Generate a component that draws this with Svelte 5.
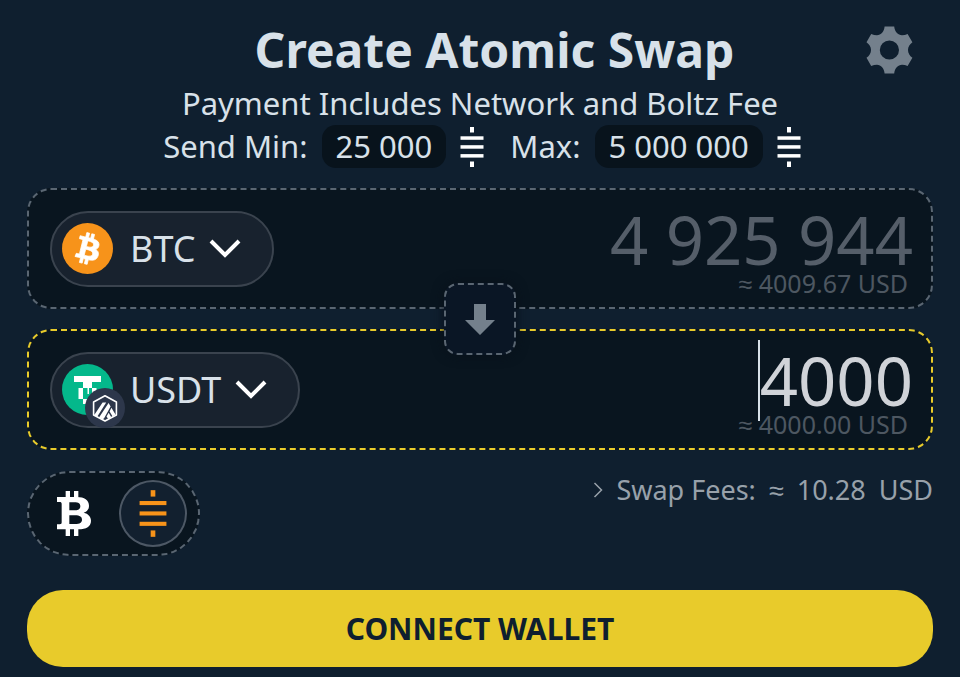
<script>
    let sendAmount = $state('4 925 944');
    let receiveAmount = $state('4000');
    let denomination = $state('sat');

    const limits = [
        { label: 'Send Min:', value: '25 000' },
        { label: 'Max:', value: '5 000 000' }
    ];
</script>

{#snippet satoshi()}
    <svg class="sat" viewBox="0 0 24 40" fill="currentColor" aria-hidden="true">
        <rect x="10" y="0" width="4" height="5.5" />
        <rect x="0.5" y="9.3" width="23" height="3.5" />
        <rect x="0.5" y="18.2" width="23" height="3.5" />
        <rect x="0.5" y="27.1" width="23" height="3.5" />
        <rect x="10" y="34.5" width="4" height="5.5" />
    </svg>
{/snippet}

{#snippet chevron()}
    <svg class="chevron" viewBox="0 0 32 20" fill="none" stroke="#fff" stroke-width="4" aria-hidden="true">
        <path d="M2 3 L16 17 L30 3" />
    </svg>
{/snippet}

<main>
    <header>
        <h1>Create Atomic Swap</h1>
        <button class="settings" aria-label="Settings">
            <svg viewBox="0 0 47 48" aria-hidden="true">
                <path
                    fill="#74808c"
                    fill-rule="evenodd"
                    d="M18.6 .5H28.2C28.6 5.5 32 9.2 36 9.2C38 9.2 39.8 8.8 41.6 8L46.4 16.2C43.6 18.2 42 21 42 24C42 27 43.6 29.8 46.4 31.8L41.6 40C39.8 39.2 38 38.8 36 38.8C32 38.8 28.6 42.5 28.2 47.5H18.6C18.2 42.5 15 38.8 11 38.8C9 38.8 7.2 39.2 5.2 40L.5 31.8C3.4 29.8 5 27 5 24C5 21 3.4 18.2 .5 16.2L5.2 8C7.2 8.8 9 9.2 11 9.2C15 9.2 18.2 5.5 18.6 .5ZM23.4 14.4A9.6 9.6 0 1 0 23.4 33.6A9.6 9.6 0 1 0 23.4 14.4Z"
                />
            </svg>
        </button>
    </header>

    <p class="subtitle">Payment Includes Network and Boltz Fee</p>
    <div class="limits">
        {#each limits as limit}
            <div class="limit">
                <span>{limit.label}</span>
                <button class="limit-value">{limit.value}</button>
                {@render satoshi()}
            </div>
        {/each}
    </div>

    <div class="assets">
        <section class="card">
            <button class="asset">
                <span class="icon">
                    <svg viewBox="0 0 32 32" aria-hidden="true">
                        <circle cx="16" cy="16" r="16" fill="#f7931a" />
                        <path
                            fill="#fff"
                            stroke="#fff"
                            stroke-width="0.5"
                            d="M23.189 14.02c.314-2.096-1.283-3.223-3.465-3.975l.708-2.84-1.728-.43-.69 2.765c-.454-.114-.92-.22-1.385-.326l.695-2.783L15.596 6l-.708 2.839c-.376-.086-.746-.17-1.104-.26l.002-.009-2.384-.595-.46 1.846s1.283.294 1.256.312c.7.175.826.638.805 1.006l-.806 3.235c.048.012.11.03.18.057l-.183-.045-1.13 4.532c-.086.212-.303.531-.793.41.018.025-1.256-.313-1.256-.313l-.858 1.978 2.25.561c.418.105.828.215 1.231.318l-.715 2.872 1.727.43.708-2.84c.472.127.93.245 1.378.357l-.706 2.828 1.728.43.715-2.866c2.948.558 5.164.333 6.097-2.333.752-2.146-.037-3.385-1.588-4.192 1.13-.26 1.98-1.003 2.207-2.538zm-3.95 5.538c-.533 2.147-4.148.986-5.32.695l.95-3.805c1.172.293 4.929.872 4.37 3.11zm.535-5.569c-.487 1.953-3.495.96-4.47.717l.86-3.45c.975.243 4.118.696 3.61 2.733z"
                        />
                    </svg>
                </span>
                BTC
                {@render chevron()}
            </button>
            <div class="amount">
                <div class="field">
                    <input class="muted" aria-label="Send amount" bind:value={sendAmount} />
                </div>
                <span class="fiat">≈ 4009.67 USD</span>
            </div>
        </section>

        <button class="flip" aria-label="Flip assets">
            <svg viewBox="0 0 30 31" fill="#74808c" aria-hidden="true">
                <path d="M9 0H21V16H30L15 31L0 16H9Z" />
            </svg>
        </button>

        <section class="card active">
            <button class="asset">
                <span class="icon">
                    <svg viewBox="0 0 51 51" aria-hidden="true">
                        <circle cx="25.5" cy="25.5" r="25.5" fill="#04b88b" />
                        <g fill="#fff">
                            <rect x="12" y="12" width="27" height="6" />
                            <rect x="21" y="18" width="9" height="6" />
                            <rect x="16.5" y="24" width="4.5" height="11" />
                            <rect x="30" y="24" width="4.5" height="6" />
                            <rect x="25.5" y="24" width="1.5" height="6" />
                            <rect x="21" y="35" width="7" height="5" />
                        </g>
                    </svg>
                    <svg class="network" viewBox="0 0 40 40" aria-hidden="true">
                        <circle cx="20" cy="20" r="20" fill="#2d374b" />
                        <path d="M20 7.8L31.4 14V27L20 33L8.600 27V14Z" fill="none" stroke="#fff" stroke-width="1.6" stroke-linejoin="round" />
                        <path
                            fill="#fff"
                            d="M17.600 14.500H21.200L12.200 28.700L9.400 27.200V26.800ZM23.600 15L25.600 18.400L19 30.500L17.200 31.200L14 29.600ZM26.400 19.800L30.500 26.500L27.600 28.500L24.600 23.400ZM23.700 24.800L26.300 29.300L23.200 31L21.500 28.500Z"
                        />
                    </svg>
                </span>
                USDT
                {@render chevron()}
            </button>
            <div class="amount">
                <div class="field">
                    <span class="caret"></span>
                    <input aria-label="Receive amount" bind:value={receiveAmount} />
                </div>
                <span class="fiat">≈ 4000.00 USD</span>
            </div>
        </section>
    </div>

    <div class="details">
        <div class="denomination">
            <button
                class:selected={denomination == 'btc'}
                aria-label="Bitcoin"
                onclick={() => (denomination = 'btc')}
            >
                <svg class="btc" viewBox="0 0 102 135" fill="currentColor" fill-rule="evenodd" aria-hidden="true">
                    <path d="M26 0H39V20H26ZM51 0H64V20H51ZM26 113H39V135H26ZM51 113H64V135H51Z" />
                    <path
                        d="M0 18H60C82 18 96 28 96 44C96 55 90 62 80 65C94 68 102 77 102 89C102 106 88 115 64 115H0V100H8C13 100 14 98 14 94V39C14 35 12 33 8 33H0ZM37 34V58H52C65 58 70 54 70 46C70 38 65 34 52 34ZM37 73V99H54C69 99 75 94 75 86C75 78 69 73 54 73Z"
                    />
                </svg>
            </button>
            <button
                class:selected={denomination == 'sat'}
                aria-label="Satoshi"
                onclick={() => (denomination = 'sat')}
            >
                {@render satoshi()}
            </button>
        </div>

        <button class="fees">
            <svg viewBox="0 0 10 16" fill="none" stroke="currentColor" stroke-width="1.5" aria-hidden="true">
                <path d="M1.500 1L8.500 8L1.500 15" />
            </svg>
            <span>Swap Fees:</span>
            <span>≈</span>
            <span>10.28</span>
            <span>USD</span>
        </button>
    </div>

    <button class="connect">CONNECT WALLET</button>
</main>

<style>
    :global(body) {
        margin: 0;
        background-color: #0f1f2f;
    }

    main {
        padding: 19px 27px 10px;
        font-family: "Noto Sans", sans-serif;
        font-size: 31px;
        color: #d8e1e9;
    }

    button {
        padding: 0;
        border: none;
        background: none;
        color: inherit;
        font: inherit;
        cursor: pointer;
    }

    svg {
        display: block;
    }

    header {
        display: grid;
        grid-template-columns: 76px 1fr 47px;
        align-items: center;
        padding: 0 20px;
    }

    h1 {
        grid-column: 2;
        margin: 0;
        font-size: 48px;
        font-weight: 700;
        line-height: 62px;
        text-align: center;
    }

    .settings svg {
        width: 47px;
        height: 48px;
    }

    .subtitle {
        margin: 0;
        line-height: 44px;
        text-align: center;
    }

    .limits {
        display: flex;
        justify-content: center;
        gap: 26px;
        padding-left: 4px;
        line-height: 43px;
    }

    .limit {
        display: flex;
        align-items: center;
        gap: 14px;
    }

    .limit-value {
        padding: 0 14px;
        border-radius: 14px;
        background-color: #08131c;
    }

    .sat {
        width: 24px;
        height: 40px;
        color: #fff;
    }

    .assets {
        position: relative;
        display: flex;
        flex-direction: column;
        gap: 20px;
        margin-top: 20px;
    }

    .card {
        display: flex;
        align-items: center;
        justify-content: space-between;
        padding: 14px 18px 13px 21px;
        border: 2px dashed #5a6672;
        border-radius: 24px;
        background-color: #09151f;
    }

    .card.active {
        border-color: #e8cb2b;
    }

    .asset {
        display: flex;
        align-items: center;
        box-sizing: border-box;
        height: 76px;
        padding: 0 31px 2px 10px;
        border: 2px solid #3a434e;
        border-radius: 38px;
        background-color: #18222e;
        font-size: 36px;
    }

    .icon {
        position: relative;
        width: 51px;
        margin-right: 17px;
    }

    .network {
        position: absolute;
        left: 23px;
        top: 24px;
        width: 40px;
    }

    .chevron {
        width: 32px;
        margin-left: 14px;
    }

    .amount {
        display: flex;
        flex-direction: column;
        align-items: flex-end;
        padding-bottom: 2px;
    }

    .field {
        display: flex;
        justify-content: flex-end;
        height: 70px;
    }

    input {
        field-sizing: content;
        height: 70px;
        padding: 0;
        border: none;
        outline: none;
        background: none;
        color: #d0d3d8;
        font-family: inherit;
        font-size: 67px;
        line-height: 70px;
        text-align: right;
    }

    input.muted {
        color: #555e69;
    }

    .caret {
        width: 2px;
        margin: -5px 0 -6px;
        background-color: #d8e1e9;
    }

    .fiat {
        padding-right: 5px;
        color: #4d5761;
        font-size: 25px;
        line-height: 18px;
    }

    .flip {
        position: absolute;
        top: 50%;
        left: 50%;
        display: grid;
        place-items: center;
        box-sizing: border-box;
        width: 72px;
        height: 72px;
        border: 2px dashed #5a6672;
        border-radius: 14px;
        background-color: #0a1625;
        box-shadow: 0 0 12px #08111a;
        transform: translate(-50%, -50%);
    }

    .flip svg {
        width: 30px;
    }

    .details {
        display: flex;
        align-items: flex-start;
        justify-content: space-between;
        margin-top: 21px;
    }

    .denomination {
        display: flex;
        gap: 11px;
        padding: 7px 11px;
        border: 2px dashed #5a6672;
        border-radius: 43px;
        background-color: #09151f;
    }

    .denomination button {
        display: grid;
        place-items: center;
        box-sizing: border-box;
        width: 68px;
        height: 67px;
        border: 2px solid transparent;
        border-radius: 50%;
        color: #fff;
    }

    .denomination button.selected {
        border-color: #4d5865;
        background-color: #12202f;
    }

    .denomination .sat {
        width: 28px;
        height: 47px;
    }

    .denomination .selected svg {
        color: #f7931a;
    }

    .btc {
        width: 34px;
        height: 45px;
    }

    .fees {
        display: flex;
        align-items: center;
        gap: 13px;
        color: #98a1aa;
        font-size: 27px;
        line-height: 38px;
    }

    .fees svg {
        width: 10px;
    }

    .connect {
        display: block;
        width: 100%;
        margin-top: 34px;
        border-radius: 36px;
        background-color: #e8cb2b;
        color: #0f1f2f;
        font-size: 30px;
        font-weight: 700;
        line-height: 77px;
    }
</style>
